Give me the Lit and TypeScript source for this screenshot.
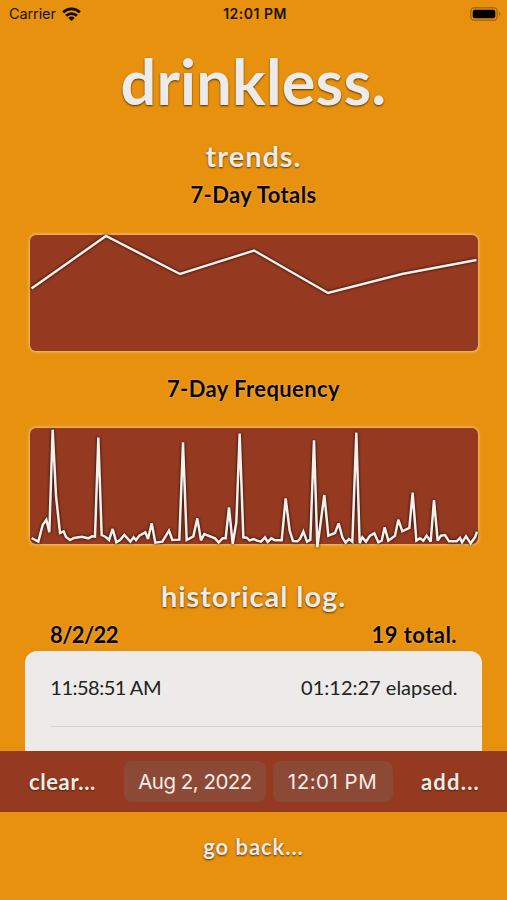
import { LitElement, html, css } from "lit";
import { customElement, property } from "lit/decorators.js";

const TOTALS = "1.5,53.5 76,1 150,39 224,15.5 298,58 372,39 446.5,25";

const FREQUENCY =
  "5,330 25,341 38,291 49,275 58,313 68,5 78,203 90,315 101,310 108,327 120,336 132,330 155,326 175,331 " +
  "186,325 195,326 205,29 215,321 227,327 237,336 248,303 259,343 270,336 283,321 301,341 311,328 318,336 " +
  "328,323 346,313 354,333 365,286 376,344 397,341 417,308 427,336 448,335 459,43 470,336 490,325 502,271 " +
  "513,337 523,318 555,331 566,343 578,331 587,331 597,238 608,348 619,283 629,17 640,328 650,329 659,337 " +
  "671,333 681,338 693,341 705,328 713,342 724,331 735,337 755,337 767,211 779,308 789,339 802,340 810,333 " +
  "820,311 831,341 841,335 852,37 862,358 883,201 895,323 915,315 926,286 937,328 947,344 957,333 967,341 " +
  "979,14 989,346 997,328 1008,341 1020,323 1033,316 1045,343 1055,338 1064,298 1075,338 1095,323 1105,275 " +
  "1117,310 1138,300 1148,194 1159,338 1170,331 1180,338 1190,323 1202,341 1212,216 1223,338 1233,323 " +
  "1245,321 1257,340 1280,340 1290,330 1296,343 1308,325 1322,346 1335,328 1341,311";

@customElement("line-chart")
class LineChart extends LitElement {
  @property() points = "";
  @property() box = "0 0 448 116";

  static styles = css`
    :host {
      display: block;
      height: 116px;
      margin: 0 29px 0 30px;
      border-radius: 6px;
      background: #953a20;
      box-shadow: 0 0 3px 0.8px rgba(240, 205, 160, 0.75);
    }
    svg {
      display: block;
      width: 100%;
      height: 100%;
      overflow: visible;
      filter: drop-shadow(0 0 1.6px rgba(0, 0, 0, 0.95));
    }
    polyline {
      fill: none;
      stroke: #f6efec;
      stroke-width: 2.5px;
      vector-effect: non-scaling-stroke;
      stroke-linejoin: miter;
      stroke-miterlimit: 3;
    }
  `;

  render() {
    return html`<svg viewBox=${this.box} preserveAspectRatio="none">
      <polyline points=${this.points}></polyline>
    </svg>`;
  }
}

@customElement("app-root")
class AppRoot extends LitElement {
  static styles = css`
    :host {
      display: flex;
      flex-direction: column;
      height: 900px;
      overflow: hidden;
      background: #e8910f;
      color: #0a0704;
      font-family: Lato, "Open Sans", sans-serif;
      white-space: nowrap;
    }
    .status {
      display: grid;
      grid-template-columns: 1fr auto 1fr;
      align-items: center;
      height: 28px;
      padding: 0 6px 0 9px;
      font: 500 14px/28px Inter, sans-serif;
      color: #1c1204;
    }
    .carrier {
      display: flex;
      align-items: center;
      gap: 6px;
      font-weight: 400;
      font-size: 14.5px;
      letter-spacing: -0.1px;
    }
    .clock {
      font-weight: 600;
      letter-spacing: 0.5px;
    }
    .battery {
      justify-self: end;
    }
    .carrier svg,
    .battery {
      display: block;
    }
    .title,
    .section,
    .label {
      text-align: center;
      flex: none;
    }
    .title {
      height: 105px;
      font-size: 63px;
      font-weight: 700;
      letter-spacing: 0.2px;
      line-height: 105px;
      color: #edebe9;
      text-shadow: 0 1px 2px rgba(60, 35, 0, 0.9);
    }
    .section {
      height: 44px;
      font-size: 29px;
      font-weight: 700;
      letter-spacing: 0.95px;
      line-height: 45px;
      color: #edebe9;
    }
    .section,
    .action {
      text-shadow: 0 0.5px 2px rgba(70, 40, 0, 0.9);
    }
    .label {
      height: 35px;
      font-size: 22px;
      font-weight: 700;
      letter-spacing: 0.4px;
      line-height: 36px;
    }
    .label,
    .day {
      text-shadow: 0 0 2px rgba(255, 235, 200, 0.6);
    }
    .totals {
      margin-top: 22.5px;
    }
    .freq-label {
      margin-top: 20px;
    }
    .frequency {
      margin-top: 22.5px;
    }
    .log-title {
      margin-top: 29px;
    }
    .day {
      display: flex;
      justify-content: space-between;
      height: 34px;
      padding: 0 50px;
      font-size: 22px;
      font-weight: 700;
      line-height: 35px;
      flex: none;
    }
    .day-date {
      letter-spacing: -0.6px;
    }
    .day-total {
      letter-spacing: 0.45px;
    }
    .card {
      flex: none;
      height: 100px;
      margin: 0 24.6px 0 25.3px;
      border-radius: 12px 12px 0 0;
      background: #ecebe9;
    }
    .entry {
      display: flex;
      justify-content: space-between;
      height: 75px;
      margin-left: 25px;
      padding-right: 25px;
      border-bottom: 1px solid #d5d4d2;
      font-size: 20px;
      line-height: 73px;
      color: #222;
    }
    .entry-time {
      letter-spacing: -0.5px;
    }
    .toolbar {
      flex: none;
      display: flex;
      align-items: center;
      height: 61px;
      padding: 0 27px 0 29px;
      background: #953a20;
    }
    .action {
      font-size: 22px;
      font-weight: 700;
      letter-spacing: 0.95px;
      color: #edebe9;
    }
    .clear {
      width: 95px;
      letter-spacing: 0.6px;
    }
    .add {
      margin-left: auto;
      letter-spacing: 1.2px;
    }
    .pill {
      display: flex;
      justify-content: center;
      align-items: center;
      height: 41px;
      border-radius: 8px;
      background: #8c4936;
      font: 400 20.5px Inter, sans-serif;
      color: #f8ece6;
    }
    .date {
      width: 142px;
      letter-spacing: -0.5px;
    }
    .time {
      width: 120px;
      margin-left: 6.5px;
      letter-spacing: 0.5px;
    }
    .back {
      margin-top: 18px;
      height: 34px;
      line-height: 34px;
      text-align: center;
    }
  `;

  render() {
    return html`
      <div class="status">
        <div class="carrier">
          <span>Carrier</span>
          <svg width="19" height="14" viewBox="0 0 19 14">
            <g fill="none" stroke="#120b02" stroke-width="2.7">
              <path d="M1.1 5.4a12 12 0 0 1 16.8 0"></path>
              <path d="M4.1 8.8a7.7 7.7 0 0 1 10.8 0"></path>
            </g>
            <path fill="#120b02" d="M9.5 14 6.3 10.9a4.6 4.6 0 0 1 6.4 0z"></path>
          </svg>
        </div>
        <span class="clock">12:01 PM</span>
        <svg class="battery" width="31" height="14" viewBox="0 0 31 14">
          <rect x="0.8" y="0.8" width="26.4" height="12.4" rx="3.6" fill="none" stroke="#a8690d" stroke-width="1.5"></rect>
          <rect x="2.7" y="2.7" width="22.6" height="8.6" rx="2" fill="#000"></rect>
          <path d="M29 4.8v4.4a2.4 2.4 0 0 0 0-4.4z" fill="#a8690d"></path>
        </svg>
      </div>
      <div class="title">drinkless.</div>
      <div class="section">trends.</div>
      <div class="label">7-Day Totals</div>
      <line-chart class="totals" .points=${TOTALS}></line-chart>
      <div class="label freq-label">7-Day Frequency</div>
      <line-chart class="frequency" .points=${FREQUENCY} box="0 0 1344 348"></line-chart>
      <div class="section log-title">historical log.</div>
      <div class="day">
        <span class="day-date">8/2/22</span>
        <span class="day-total">19 total.</span>
      </div>
      <div class="card">
        <div class="entry">
          <span class="entry-time">11:58:51 AM</span>
          <span>01:12:27 elapsed.</span>
        </div>
      </div>
      <div class="toolbar">
        <span class="action clear">clear...</span>
        <div class="pill date">Aug 2, 2022</div>
        <div class="pill time">12:01 PM</div>
        <span class="action add">add...</span>
      </div>
      <div class="action back">go back...</div>
    `;
  }
}
